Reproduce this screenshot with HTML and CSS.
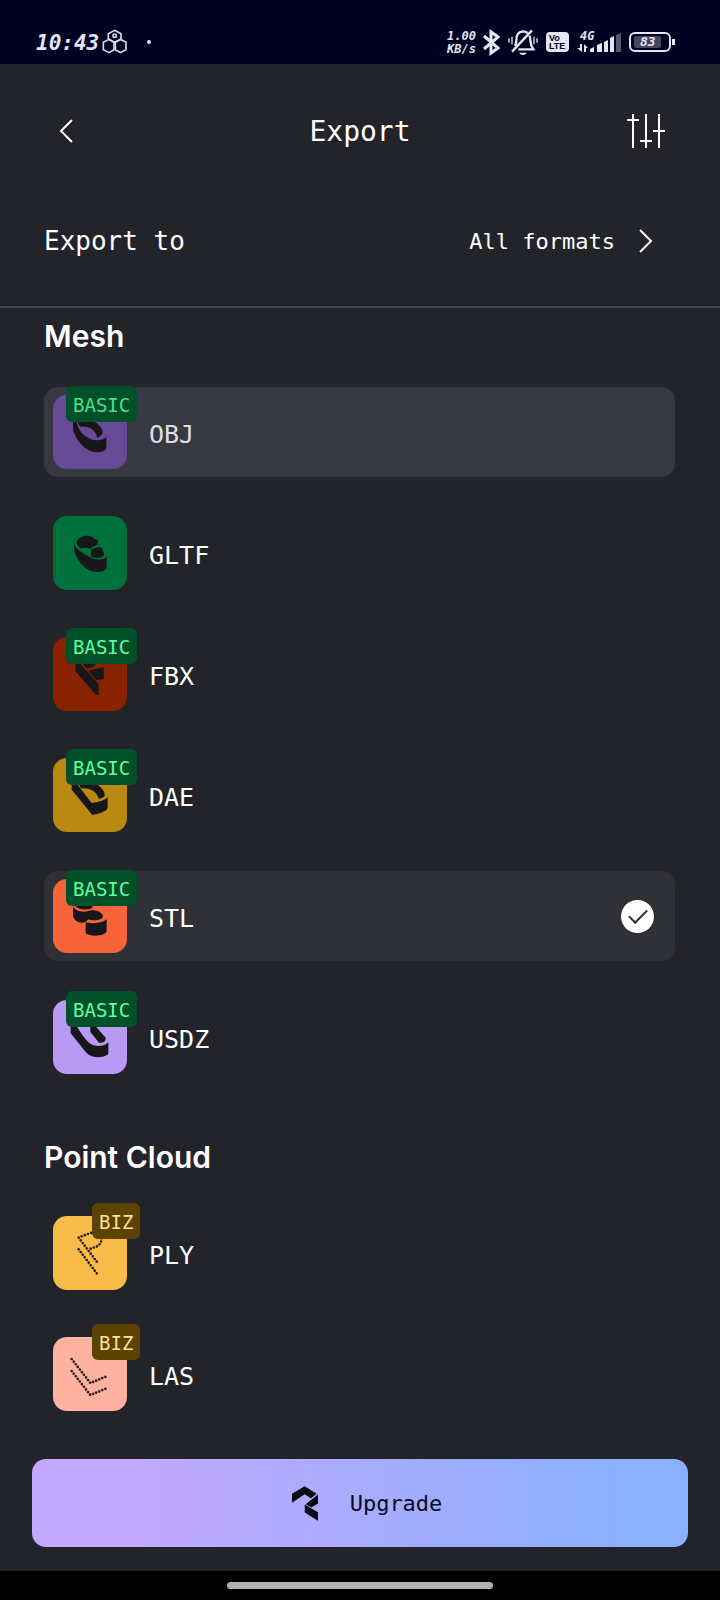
FILE: index.html
```html
<!DOCTYPE html>
<html lang="en">
<head>
    <meta charset="UTF-8">
    <meta name="viewport" content="width=device-width, initial-scale=1.0">
    <title>Export</title>
    <link rel="stylesheet" href="styles.css">
</head>
<body>
    <div class="status-bar">
        <div class="status-left">
            <span class="clock">10:43</span>
            <svg width="26" height="26" viewBox="308 88 78 78" fill="none" stroke="#d8d8ec" stroke-width="5">
                <path d="M346 92l19 10v17l-19 9-19-9v-17z"/>
                <path d="M329 119l15 9v22l-15 9-17-9v-22z"/>
                <path d="M363 119l17 9v22l-17 9-15-9v-22z"/>
                <circle cx="346" cy="108" r="5"/>
            </svg>
            <span class="dot"></span>
        </div>
        <div class="status-right">
            <div class="speed"><span>1.00</span><span>KB/s</span></div>
            <svg width="17" height="27" viewBox="0 0 17 27" fill="none" stroke="#e4e4f2" stroke-width="3">
                <path d="M1 7l14 12-7 5V3l7 5L1 20"/>
            </svg>
            <svg width="30" height="27" viewBox="447 87 90 81" fill="none" stroke="#e4e4f2" stroke-width="7">
                <path d="M468 138c4-6 4-10 4-18 0-16 8-25 20-26 6 0 10 2 14 5M512 107c4 14-1 24 11 41h-45M459 155l60-64"/>
                <path d="M450 115v13M459 110v23M525 110v23M534 115v13" stroke-width="4"/>
                <path d="M481 158h22c-3 9-19 9-22 0z" fill="#e4e4f2" stroke="none"/>
            </svg>
            <div class="volte"><span>Vo</span><span>LTE</span></div>
            <div class="signal">
                <span>4G</span>
                <svg width="44" height="20" viewBox="0 0 44 20" fill="#e4e4f2">
                    <path d="M3 12h2v8L0 16h3zM7 20v-8l4 4H9v4z"/>
                    <path d="M13 20v-3l4-2v5zM20 20v-7l5-2v9zM27 20V10l4-2v12zM33 20V6l4-2v16z"/>
                    <path d="M39 20V3l5-2v19z" fill="#55556f"/>
                </svg>
            </div>
            <div class="battery"><span>83</span></div>
        </div>
    </div>

    <header class="header">
        <button class="back-btn" aria-label="Back">
            <svg width="14" height="24" viewBox="0 0 14 24" fill="none" stroke="#fff" stroke-width="2">
                <path d="M13 1L2 12l11 11"/>
            </svg>
        </button>
        <h1>Export</h1>
        <button class="settings-btn" aria-label="Settings">
            <svg width="38" height="34" viewBox="0 0 38 34" fill="none" stroke="#fff" stroke-width="2">
                <path d="M6 0v34M0 6h12M19 0v34M13 27h12M32 0v34M26 17h12"/>
            </svg>
        </button>
    </header>

    <div class="export-to">
        <span>Export to</span>
        <button class="formats-btn">
            All formats
            <svg width="14" height="24" viewBox="0 0 14 24" fill="none" stroke="#fff" stroke-width="2">
                <path d="M1 1l11 11L1 23"/>
            </svg>
        </button>
    </div>

    <main>
        <section>
            <h2>Mesh</h2>
            <div class="format-list">
                <label class="format pressed">
                    <span class="tile obj">
                        <svg viewBox="0 0 222 222">
                            <path d="M60 66V100C65 135 100 172 130 172C150 172 158 165 160 158V125C150 138 120 140 100 125C80 112 70 92 70 66Z"/>
                            <path d="M74 74H104C130 78 148 95 149 112C148 120 142 126 132 128C132 118 120 100 104 97C94 94 86 94 82 96C77 88 74 82 74 74Z"/>
                        </svg>
                        <span class="badge basic">BASIC</span>
                    </span>
                    <span class="name">OBJ</span>
                    <input type="radio" name="format">
                </label>
                <label class="format">
                    <span class="tile gltf">
                        <svg viewBox="70 51 222 222">
                            <path d="M133 136C130 165 150 200 178 213C200 223 228 220 231 205V172C225 185 195 185 175 172C155 160 140 150 133 136Z"/>
                            <path d="M141 130C146 112 165 106 187 113L193 119L205 124L203 138L189 143L182 150C172 146 162 145 153 149C145 143 140 137 141 130Z"/>
                            <path d="M184 152L197 146L216 145L223 163L221 170C213 178 198 178 184 173Z"/>
                        </svg>
                    </span>
                    <span class="name">GLTF</span>
                    <input type="radio" name="format">
                </label>
                <label class="format">
                    <span class="tile fbx">
                        <svg viewBox="70 412 222 222">
                            <path d="M138 480V515L199 586L207 585V553L152 492V480Z"/>
                            <path d="M155 488H197V499L172 507Z"/>
                            <path d="M176 513L222 502V538L200 541Z"/>
                        </svg>
                        <span class="badge basic">BASIC</span>
                    </span>
                    <span class="name">FBX</span>
                    <input type="radio" name="format">
                </label>
                <label class="format">
                    <span class="tile dae">
                        <svg viewBox="70 87 222 222">
                            <path d="M126 155V182L188 258C210 252 234 248 234 233V203C228 213 210 218 186 222L140 162Z"/>
                            <path d="M145 160H190C215 172 228 190 225 200C222 205 214 208 207 209C203 188 180 175 154 178Z"/>
                        </svg>
                        <span class="badge basic">BASIC</span>
                    </span>
                    <span class="name">DAE</span>
                    <input type="radio" name="format">
                </label>
                <label class="format">
                    <span class="tile stl">
                        <svg viewBox="70 448 222 222">
                            <path d="M136 520H188V536C170 542 145 540 136 528Z"/>
                            <path d="M130 530C140 548 162 549 185 542C205 540 222 552 220 562C215 573 190 574 176 569L166 578C150 582 130 572 130 555Z"/>
                            <path d="M168 577C185 583 217 582 231 569V604C228 620 182 622 168 611Z"/>
                        </svg>
                        <span class="badge basic">BASIC</span>
                    </span>
                    <span class="name">STL</span>
                    <input type="radio" name="format" checked>
                </label>
                <label class="format">
                    <span class="tile usdz">
                        <svg viewBox="70 92 222 222">
                            <path d="M123 160V192L170 250C185 265 215 270 236 255V218C225 232 200 235 180 222C170 215 145 180 136 162Z"/>
                            <path d="M182 162H190L228 205C228 215 222 222 208 220L182 188Z"/>
                        </svg>
                        <span class="badge basic">BASIC</span>
                    </span>
                    <span class="name">USDZ</span>
                    <input type="radio" name="format">
                </label>
            </div>
        </section>

        <section>
            <h2>Point Cloud</h2>
            <div class="format-list">
                <label class="format">
                    <span class="tile ply">
                        <svg class="dotted" viewBox="70 80 222 222">
                            <path d="M147 145L202 218M147 180L202 253M156 141L186 130M183 178L205 170C215 160 220 150 210 132"/>
                        </svg>
                        <span class="badge biz">BIZ</span>
                    </span>
                    <span class="name">PLY</span>
                    <input type="radio" name="format">
                </label>
                <label class="format">
                    <span class="tile las">
                        <svg class="dotted" viewBox="70 445 222 222">
                            <path d="M126 511L182 583L236 561M126 547L182 619L236 597"/>
                        </svg>
                        <span class="badge biz">BIZ</span>
                    </span>
                    <span class="name">LAS</span>
                    <input type="radio" name="format">
                </label>
            </div>
        </section>
    </main>

    <footer>
        <button class="upgrade-btn">
            <svg width="26" height="35" viewBox="876 168 78 104" fill="#0b0b12">
                <path d="M876 191L914 168L950 191L933 204L914 192L876 218Z"/>
                <path d="M954 193V220L934 232L917 222Z"/>
                <path d="M914 223L954 246V272L914 247Z"/>
            </svg>
            Upgrade
        </button>
    </footer>
    <div class="nav-bar"><span></span></div>
</body>
</html>
```

FILE: styles.css
```css
* {
    box-sizing: border-box;
}
body {
    margin: 0;
    min-height: 100vh;
    display: flex;
    flex-direction: column;
    background-color: #232429;
    color: white;
    font-family: "DejaVu Sans Mono", monospace;
}
h1, h2 {
    margin: 0;
}
button {
    padding: 0;
    border: none;
    background: none;
    color: inherit;
    font-family: inherit;
    cursor: pointer;
}
svg {
    display: block;
    flex-shrink: 0;
}

/* Status bar */
.status-bar {
    display: flex;
    justify-content: space-between;
    align-items: center;
    height: 64px;
    padding: 20px 45px 0 36px;
    background-color: #000020;
    color: #e4e4f2;
    font-weight: bold;
    font-style: italic;
}
.status-left, .status-right {
    display: flex;
    align-items: center;
}
.status-left {
    gap: 3px;
}
.status-right {
    gap: 8px;
}
.clock {
    font-size: 21px;
    line-height: 24px;
    padding-top: 2px;
}
.dot {
    width: 4px;
    height: 4px;
    margin-left: 16px;
    border-radius: 50%;
    background-color: #e4e4f2;
}
.speed {
    display: flex;
    flex-direction: column;
    width: 28px;
    padding-top: 2px;
    font-size: 12px;
    line-height: 13px;
}
.volte {
    display: flex;
    flex-direction: column;
    width: 23px;
    height: 20px;
    padding: 2px 0 0 3px;
    border-radius: 4px;
    background-color: #e4e4f2;
    color: #000020;
    font-family: "Liberation Sans", sans-serif;
    font-size: 9px;
    font-style: normal;
    line-height: 8px;
}
.signal {
    position: relative;
}
.signal span {
    position: absolute;
    top: -3px;
    left: 3px;
    font-size: 12px;
    line-height: 14px;
}
.battery {
    position: relative;
    width: 42px;
    height: 20px;
    margin-right: 4px;
    padding: 2px 8px 2px 3px;
    border: 2px solid #e4e4f2;
    border-radius: 6px;
}
.battery span {
    display: block;
    padding-left: 6px;
    border-radius: 2px;
    background-color: #45455f;
    font-size: 13px;
    line-height: 12px;
}
.battery::after {
    content: "";
    position: absolute;
    top: 5px;
    right: -6px;
    width: 3px;
    height: 6px;
    background-color: #e4e4f2;
}

/* Header */
.header {
    display: flex;
    justify-content: space-between;
    align-items: center;
    height: 134px;
    padding: 0 45px;
}
.header h1 {
    font-size: 28px;
    font-weight: normal;
}
.back-btn, .settings-btn {
    display: flex;
    align-items: center;
    width: 58px;
    height: 44px;
}
.back-btn {
    padding-left: 14px;
}
.settings-btn {
    padding-left: 10px;
}
.export-to {
    display: flex;
    justify-content: space-between;
    align-items: center;
    padding: 27px 45px 49px 44px;
    border-bottom: 2px solid #42434c;
    font-size: 26px;
    line-height: 32px;
}
.formats-btn {
    display: flex;
    align-items: center;
    gap: 24px;
    padding-right: 22px;
    font-size: 22px;
}

/* Formats */
main {
    padding: 10px 45px 40px 44px;
}
section + section {
    margin-top: 57px;
}
h2 {
    margin-bottom: 33px;
    font-family: Inter, sans-serif;
    font-size: 30px;
    font-weight: 600;
    line-height: 36px;
}
.format-list {
    display: flex;
    flex-direction: column;
    gap: 31px;
}
.format {
    display: flex;
    align-items: center;
    height: 90px;
    padding: 0 21px 0 9px;
    border-radius: 14px;
    cursor: pointer;
}
.format:has(input:checked) {
    background-color: #303136;
}
.format.pressed {
    background-color: #373942;
}
.pressed .name {
    color: #dddde2;
}
.name {
    flex: 1;
    margin-left: 22px;
    padding-top: 4px;
    font-size: 25px;
}
.tile {
    position: relative;
    width: 74px;
    height: 74px;
    border-radius: 14px;
}
.tile svg {
    fill: #17171a;
}
.tile .dotted {
    fill: none;
    stroke: #2b1a1c;
    stroke-width: 8;
    stroke-linecap: round;
    stroke-dasharray: 0 10;
}
.obj { background-color: #674b96; }
.gltf { background-color: #00703c; }
.fbx { background-color: #882200; }
.dae { background-color: #b98912; }
.stl { background-color: #f7633a; }
.usdz { background-color: #b89af5; }
.ply { background-color: #f7bc48; }
.las { background-color: #ffb29f; }

.badge {
    position: absolute;
    height: 36px;
    padding: 0 7px;
    border-radius: 6px;
    font-size: 19px;
    line-height: 38px;
}
.basic {
    top: -9px;
    left: 13px;
    background-color: #00502a;
    color: #5fff9f;
}
.pressed .basic {
    color: #4be08a;
}
.biz {
    top: -13px;
    left: 39px;
    background-color: #5c4300;
    color: #ffdf9e;
}

.format input {
    appearance: none;
    display: flex;
    justify-content: center;
    align-items: center;
    width: 33px;
    height: 33px;
    margin: 0;
    border-radius: 50%;
}
.format input:checked {
    background-color: white;
}
.format input:checked::before {
    content: "";
    width: 16px;
    height: 8px;
    margin-bottom: 4px;
    border-left: 2px solid #303136;
    border-bottom: 2px solid #303136;
    transform: rotate(-45deg);
}

/* Bottom */
footer {
    margin-top: auto;
    padding: 0 32px 24px;
}
.upgrade-btn {
    display: flex;
    justify-content: center;
    align-items: center;
    gap: 32px;
    width: 100%;
    height: 88px;
    padding-left: 14px;
    border-radius: 14px;
    background: linear-gradient(90deg, #c3a8ff 15%, #8ab0ff 90%);
    color: #0b0b1c;
    font-size: 22px;
}
.nav-bar {
    display: flex;
    justify-content: center;
    padding: 11px 0;
    background-color: black;
}
.nav-bar span {
    width: 37%;
    height: 7px;
    border-radius: 4px;
    background-color: #b2b2b2;
}
```
